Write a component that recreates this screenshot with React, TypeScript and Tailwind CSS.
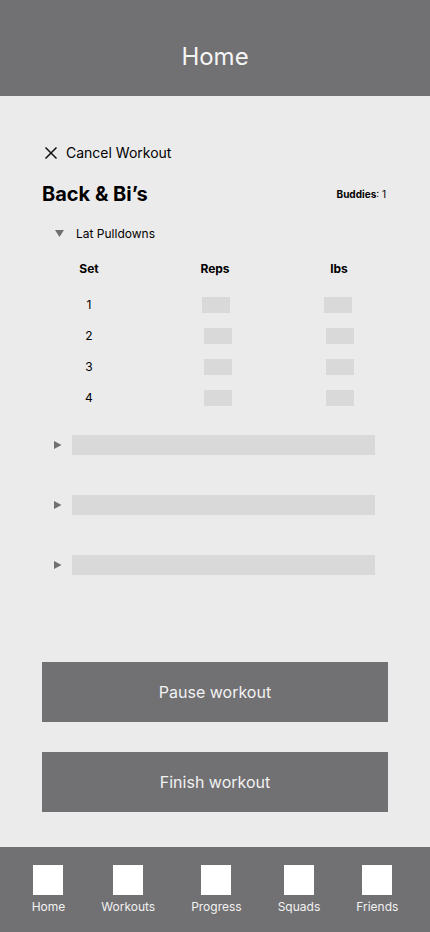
import React from "react";

const DownTri = () => (
  <svg width="9" height="8" viewBox="0 0 9 8" className="block">
    <polygon points="0,0 9,0 4.5,7" fill="#6f6f6f" />
  </svg>
);

const RightTri = () => (
  <svg width="8" height="8" viewBox="0 0 8 8" className="block">
    <polygon points="0,0 7.5,4 0,8" fill="#6f6f6f" />
  </svg>
);

const sets = [1, 2, 3, 4];
const navItems = ["Home", "Workouts", "Progress", "Squads", "Friends"];

export default function App() {
  return (
    <div className="h-[932px] w-[430px] flex flex-col bg-[#ebebeb] font-['Inter',sans-serif] text-black overflow-hidden">
      <header className="h-[96px] shrink-0 bg-[#717072] flex justify-center pt-[41px]">
        <h1 className="text-[24px] leading-[32px] text-[#f5f5f5] font-normal">Home</h1>
      </header>

      <main className="px-[42px] flex flex-col">
        <div className="mt-[47px] flex items-center h-[20px]">
          <svg width="12" height="12" viewBox="0 0 12 12" className="ml-[3px] block">
            <path d="M1 1 L11 11 M11 1 L1 11" stroke="#111" strokeWidth="1.5" strokeLinecap="square" />
          </svg>
          <span className="ml-[9px] text-[14px] leading-[20px]">Cancel Workout</span>
        </div>

        <div className="mt-[17px] flex items-center justify-between h-[28px]">
          <h2 className="text-[20px] leading-[28px] font-bold">Back &amp; Bi’s</h2>
          <span className="text-[10px] leading-[14px] mr-[2px]">
            <span className="font-bold">Buddies</span>: 1
          </span>
        </div>

        <div className="mt-[18px] flex items-center h-[16px]">
          <div className="ml-[13px]">
            <DownTri />
          </div>
          <span className="ml-[12px] text-[12px] leading-[16px]">Lat Pulldowns</span>
        </div>

        <div className="mt-[19px] grid grid-cols-[94px_158px_90px] text-[12px] leading-[16px] font-bold">
          <div className="text-center">Set</div>
          <div className="text-center">Reps</div>
          <div className="text-center">lbs</div>
        </div>

        <div className="mt-[12px] flex flex-col">
          {sets.map((n) => (
            <div key={n} className="h-[31px] grid grid-cols-[94px_158px_90px] items-center text-[12px]">
              <div className="text-center">{n}</div>
              <div className="flex justify-center">
                <div className={`h-[16px] w-[28px] bg-[#d9d9d9] ${n === 1 ? "ml-[2px]" : "ml-[6px]"}`} />
              </div>
              <div className="flex justify-center">
                <div className={`h-[16px] w-[28px] bg-[#d9d9d9] ${n === 1 ? "ml-[-2px]" : "ml-[2px]"}`} />
              </div>
            </div>
          ))}
        </div>

        <div className="mt-[22px] flex flex-col gap-[40px]">
          {[0, 1, 2].map((i) => (
            <div key={i} className="flex items-center h-[20px]">
              <div className="ml-[12px]">
                <RightTri />
              </div>
              <div className="ml-[10px] h-[20px] w-[303px] bg-[#d9d9d9]" />
            </div>
          ))}
        </div>

        <div className="mt-[87px] flex flex-col gap-[30px]">
          <button className="h-[60px] w-[346px] bg-[#717072] text-[16px] text-[#f2f2f2]">Pause workout</button>
          <button className="h-[60px] w-[346px] bg-[#717072] text-[16px] text-[#f2f2f2]">Finish workout</button>
        </div>
      </main>

      <nav className="mt-auto h-[85px] shrink-0 bg-[#717072] flex justify-center gap-[36px] pt-[18px]">
        {navItems.map((label) => (
          <div key={label} className="flex flex-col items-center">
            <div className="h-[30px] w-[30px] bg-white" />
            <span className="mt-[4px] text-[12px] leading-[16px] text-[#f2f2f2]">{label}</span>
          </div>
        ))}
      </nav>
    </div>
  );
}
